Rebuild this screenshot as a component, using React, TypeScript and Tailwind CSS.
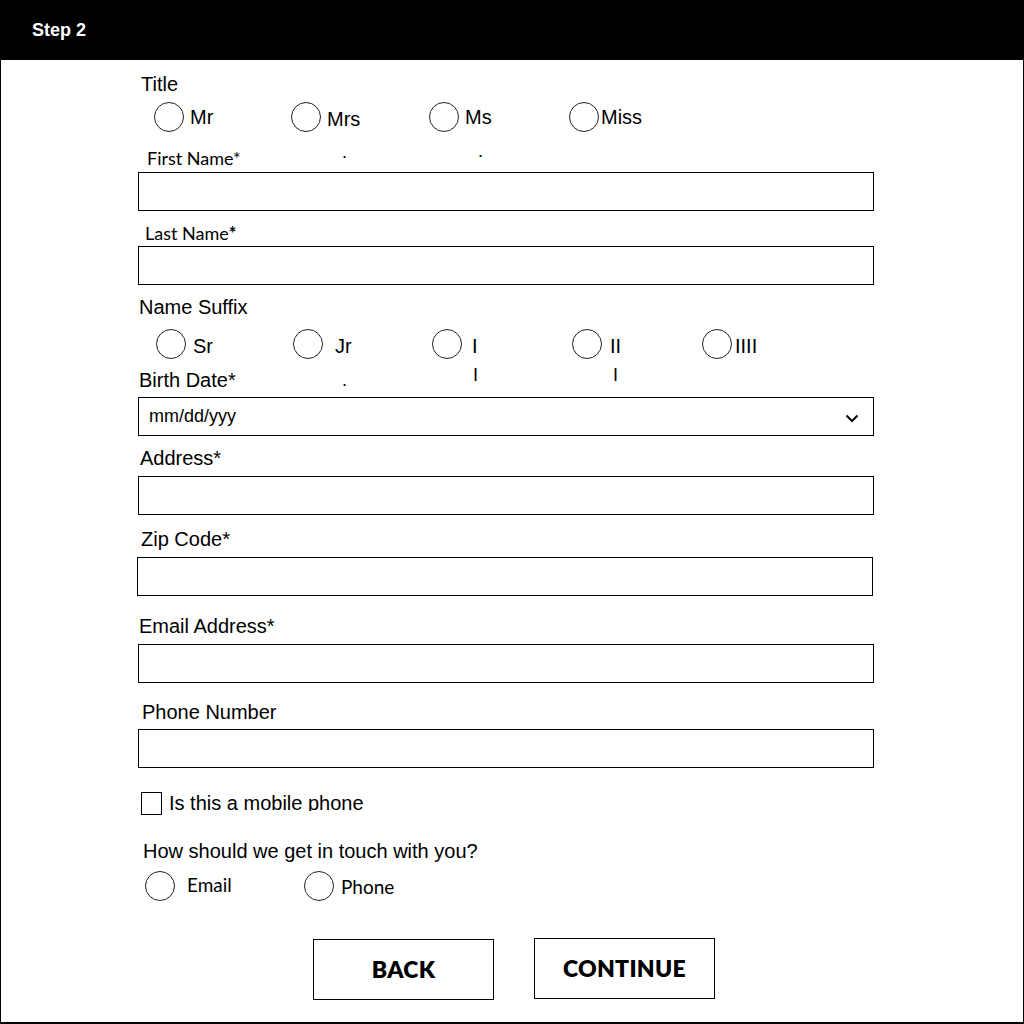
import React from "react";

const arial = { fontFamily: '"Liberation Sans", Arial, sans-serif' };
const geo = { fontFamily: 'Lato, "Open Sans", sans-serif' };

function Circle() {
  return <span className="block w-[30px] h-[30px] rounded-full border border-[#222] bg-white shrink-0" />;
}

function RadioOption({
  label,
  width,
  gap,
  shift = 0,
  font = "arial",
}: {
  label: string;
  width: number;
  gap: number;
  shift?: number;
  font?: "arial" | "geo";
}) {
  return (
    <label className="flex items-center shrink-0" style={{ width }}>
      <Circle />
      <span
        className={font === "arial" ? "text-[20px] leading-[24px] text-black" : "text-[19px] leading-[24px] text-black"}
        style={{ ...(font === "arial" ? arial : geo), marginLeft: gap, position: "relative", top: shift }}
      >
        {label}
      </span>
    </label>
  );
}

function TextBox({ className = "" }: { className?: string }) {
  return <input type="text" className={`block w-[736px] h-[39px] border border-black bg-white outline-none ${className}`} />;
}

export default function App() {
  return (
    <div className="w-[1024px] h-[1024px] bg-white border-x border-b-2 border-black overflow-hidden">
      <header className="h-[60px] bg-black flex items-center pl-[32px] -mx-px">
        <span className="text-white font-bold text-[18px]" style={arial}>
          Step 2
        </span>
      </header>

      <form className="pl-[136px] flex flex-col" onSubmit={(e) => e.preventDefault()}>
        {/* Title */}
        <div className="mt-[12px] pl-[4px] text-[20px] leading-[24px]" style={arial}>
          Title
        </div>
        <div className="mt-[6px] pl-[17px] flex h-[30px]">
          <RadioOption label="Mr" width={137} gap={6} />
          <RadioOption label="Mrs" width={138} gap={6} shift={2} />
          <RadioOption label="Ms" width={140} gap={6} />
          <RadioOption label="Miss" width={140} gap={2} />
        </div>

        {/* First name */}
        <div className="mt-[15px] h-[22px] flex items-start relative">
          <span className="pl-[10px] text-[18px] leading-[22px] w-[205px] shrink-0" style={geo}>
            First Name*
          </span>
          <span className="text-[18px] leading-[10px] w-[136px] shrink-0" style={arial}>
            .
          </span>
          <span className="text-[18px] leading-[8px]" style={arial}>
            .
          </span>
        </div>
        <TextBox className="mt-[3px] ml-px" />

        {/* Last name */}
        <div className="mt-[11px] pl-[8px] h-[22px] text-[18px] leading-[22px]" style={geo}>
          Last Name<span className="font-bold">*</span>
        </div>
        <TextBox className="mt-[2px] ml-px" />

        {/* Suffix */}
        <div className="mt-[10px] pl-[2px] text-[20px] leading-[24px]" style={arial}>
          Name Suffix
        </div>
        <div className="mt-[10px] pl-[19px] flex h-[30px]">
          <RadioOption label="Sr" width={137} gap={7} shift={2} />
          <RadioOption label="Jr" width={139} gap={12} shift={2} />
          <RadioOption label="I" width={140} gap={10} shift={2} />
          <RadioOption label="II" width={130} gap={8} shift={2} />
          <RadioOption label="IIII" width={100} gap={3} shift={2} />
        </div>

        {/* Birth date */}
        <div className="mt-[9px] h-[24px] flex items-start" style={arial}>
          <span className="pl-[2px] w-[205px] shrink-0 text-[20px] leading-[24px]">Birth Date*</span>
          <span className="w-[131px] shrink-0 text-[18px] leading-[24px]">.</span>
          <span className="w-[140px] shrink-0 text-[18px] leading-[14px]">I</span>
          <span className="text-[18px] leading-[14px]">I</span>
        </div>
        <div className="mt-[5px] ml-px w-[736px] h-[39px] border border-black flex items-center justify-between pl-[10px] pr-[14px]">
          <span className="text-[18px] text-black" style={arial}>
            mm/dd/yyy
          </span>
          <svg width="14" height="9" viewBox="0 0 14 9" className="mt-[4px]">
            <polyline points="1.5,1.5 7,7 12.5,1.5" fill="none" stroke="#000" strokeWidth="2" />
          </svg>
        </div>

        {/* Address */}
        <div className="mt-[10px] pl-[3px] text-[20px] leading-[24px]" style={arial}>
          Address*
        </div>
        <TextBox className="mt-[6px] ml-px" />

        {/* Zip */}
        <div className="mt-[12px] pl-[4px] text-[20px] leading-[24px]" style={arial}>
          Zip Code*
        </div>
        <TextBox className="mt-[6px]" />

        {/* Email */}
        <div className="mt-[18px] pl-[2px] text-[20px] leading-[24px]" style={arial}>
          Email Address*
        </div>
        <TextBox className="mt-[6px] ml-px" />

        {/* Phone */}
        <div className="mt-[17px] pl-[5px] text-[20px] leading-[24px]" style={arial}>
          Phone Number
        </div>
        <TextBox className="mt-[5px] ml-px" />

        {/* Mobile checkbox */}
        <div className="mt-[24px] pl-[4px] flex items-start h-[23px]">
          <span className="block w-[21px] h-[23px] border border-black shrink-0" />
          <span className="ml-[7px] h-[20px] overflow-hidden text-[20px] leading-[24px] mt-[-1px]" style={arial}>
            Is this a mobile phone
          </span>
        </div>

        {/* Contact preference */}
        <div className="mt-[24px] pl-[6px] text-[20px] leading-[24px]" style={arial}>
          How should we get in touch with you?
        </div>
        <div className="mt-[8px] pl-[8px] flex h-[30px]">
          <RadioOption label="Email" width={159} gap={12} shift={-1} font="geo" />
          <RadioOption label="Phone" width={120} gap={7} shift={1} font="geo" />
        </div>

        {/* Actions */}
        <div className="mt-[37px] pl-[176px] flex items-start">
          <button
            type="button"
            className="mt-px w-[181px] h-[61px] border border-black bg-white text-[23px] font-extrabold tracking-[0.3px] text-black"
            style={geo}
          >
            BACK
          </button>
          <button
            type="submit"
            className="ml-[40px] w-[181px] h-[61px] border border-black bg-white text-[23px] font-extrabold tracking-[0.3px] text-black"
            style={geo}
          >
            CONTINUE
          </button>
        </div>
      </form>
    </div>
  );
}
